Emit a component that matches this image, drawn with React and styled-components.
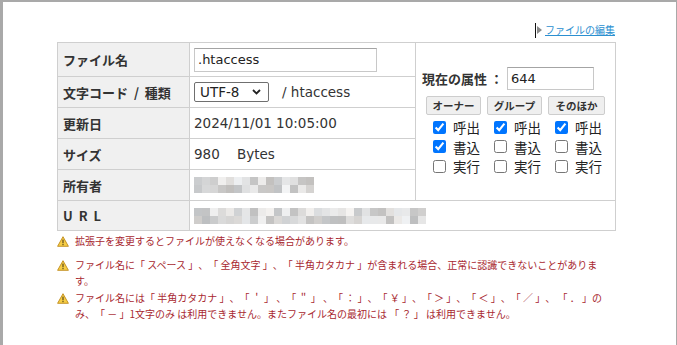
import React from 'react';
import styled, { createGlobalStyle } from 'styled-components';

const JP = '"Noto Sans CJK JP", "Noto Sans", sans-serif';
const LATIN = '"DejaVu Sans", "Noto Sans CJK JP", sans-serif';

const GlobalStyle = createGlobalStyle`
  html, body {
    margin: 0;
    padding: 0;
  }
  body {
    background: #a9a9a9;
    font-family: ${JP};
    color: #333;
    text-spacing-trim: space-all;
  }
`;

const Panel = styled.div`
  margin: 2px 1px 0 3px;
  min-height: 343px;
  background: #fff;
  box-sizing: border-box;
  padding: 20px 0 0 54px;
`;

const LinkBar = styled.div`
  width: 559px;
  height: 16px;
  margin-bottom: 4px;
  display: flex;
  justify-content: flex-end;
  align-items: center;
`;

const Caret = styled.span`
  width: 1px;
  height: 15px;
  background: #111;
  margin-right: 1px;
`;

const Arrow = styled.span`
  width: 0;
  height: 0;
  border-top: 4px solid transparent;
  border-bottom: 4px solid transparent;
  border-left: 5px solid #8a8a8a;
  margin-right: 3px;
`;

const EditLink = styled.a`
  font-family: ${JP};
  font-size: 10px;
  line-height: 16px;
  color: #2b8fd0;
  text-decoration: underline;
  margin-right: 1px;
`;

const Grid = styled.div`
  width: 559px;
  box-sizing: border-box;
  display: grid;
  grid-template-columns: 132px 226px 1fr;
  grid-template-rows: 34px 31px 31px 31px 31px 30px;
  border-top: 1px solid #cfcfcf;
  border-left: 1px solid #cfcfcf;
`;

const Cell = styled.div`
  border-right: 1px solid #cfcfcf;
  border-bottom: 1px solid #cfcfcf;
  display: flex;
  align-items: center;
  min-width: 0;
`;

const Label = styled(Cell)`
  background: #f0f0f0;
  padding-left: 5px;
  font-family: ${JP};
  font-weight: 700;
  font-size: 13px;
  color: #333;
  white-space: pre;
  letter-spacing: ${(p) => (p.$spread ? '6px' : '0')};
`;

const Value = styled(Cell)`
  padding-left: 4px;
  font-family: ${LATIN};
  font-size: 13.5px;
  color: #333;
  white-space: pre;
  grid-column: ${(p) => p.$span || 'auto'};
`;

const TextInput = styled.input`
  box-sizing: border-box;
  width: ${(p) => p.$w}px;
  height: ${(p) => p.$h}px;
  border: 1px solid #c8c8c8;
  border-top-color: #a4a4a4;
  padding: 0 0 0 3px;
  font-family: ${LATIN};
  font-size: 13px;
  color: #222;
  outline: none;
`;

const SelectWrap = styled.span`
  position: relative;
  display: inline-flex;
`;

const Select = styled.select`
  appearance: none;
  box-sizing: border-box;
  width: 75px;
  height: 20px;
  border: 1px solid #6f6f6f;
  border-radius: 2px;
  background: #fff;
  padding: 0 0 0 5px;
  font-family: ${LATIN};
  font-size: 13.5px;
  color: #222;
`;

const Chevron = styled.svg`
  position: absolute;
  right: 8px;
  top: 7px;
  pointer-events: none;
`;

const Kind = styled.span`
  margin-left: 13px;
`;

const Attr = styled.div`
  grid-column: 3;
  grid-row: 1 / 6;
  border-right: 1px solid #cfcfcf;
  border-bottom: 1px solid #cfcfcf;
  display: flex;
  flex-direction: column;
  justify-content: center;
  padding-left: 6px;
`;

const AttrRow = styled.div`
  display: flex;
  align-items: center;
  font-family: ${JP};
  font-weight: 700;
  font-size: 13px;
  color: #333;
  gap: 4px;
`;

const Perms = styled.div`
  display: grid;
  grid-template-columns: 55px 55px 57px;
  column-gap: 6px;
  padding-left: 4px;
  margin-top: 6px;
`;

const RoleButton = styled.button`
  height: 19px;
  padding: 0;
  border: 1px solid #cdcdcd;
  border-radius: 2px;
  background: #efefef;
  font-family: ${JP};
  font-weight: 700;
  font-size: 10.5px;
  color: #333;
  margin-bottom: 2px;
`;

const PermCol = styled.div`
  display: flex;
  flex-direction: column;
  padding-left: ${(p) => (p.$head ? '0' : '7px')};
`;

const Check = styled.label`
  height: 19.5px;
  display: flex;
  align-items: center;
  gap: 7px;
  font-family: ${JP};
  font-size: 13.5px;
  color: #222;

  input {
    margin: 0;
    width: 13px;
    height: 13px;
    accent-color: #0075ff;
  }
`;

const Notes = styled.div`
  width: 559px;
  margin-top: 2px;
  font-family: ${JP};
  font-size: 10px;
  line-height: 16px;
  color: #a8282f;
`;

const Note = styled.div`
  display: flex;
  margin-bottom: ${(p) => (p.$gap ? '8px' : '1px')};
`;

const NoteIcon = styled.span`
  flex: 0 0 18px;
  height: 16px;
  display: flex;
  align-items: center;
`;

const NoteText = styled.span`
  flex: 1;
`;

const shade = (i, seed) => {
  const x = Math.sin(i * 12.9898 + seed * 78.233) * 43758.5453;
  const f = x - Math.floor(x);
  return Math.round(0xbe + f * 0x36);
};

const Mosaic = ({ cols, seed }) => (
  <svg width={cols * 8} height={16} viewBox={`0 0 ${cols * 8} 16`}>
    {Array.from({ length: cols * 2 }).map((_, i) => {
      const g = shade(i, seed);
      const tint = (i % 5) - 2;
      return (
        <rect
          key={i}
          x={(i % cols) * 8}
          y={Math.floor(i / cols) * 8}
          width={8}
          height={8}
          fill={`rgb(${g + tint},${g},${g - tint})`}
        />
      );
    })}
  </svg>
);

const Warning = () => (
  <svg width="12" height="11" viewBox="0 0 12 11">
    <path d="M6 0.7 L11.4 10.3 H0.6 Z" fill="#f6cd45" stroke="#c08a1a" strokeWidth="0.9" strokeLinejoin="round" />
    <rect x="5.4" y="3.6" width="1.2" height="3.7" fill="#5a4a1a" />
    <rect x="5.4" y="8" width="1.2" height="1.2" fill="#5a4a1a" />
  </svg>
);

const roles = ['オーナー', 'グループ', 'そのほか'];
const perms = [
  [true, true, false],
  [true, false, false],
  [true, false, false],
];
const permNames = ['呼出', '書込', '実行'];

const notes = [
  '拡張子を変更するとファイルが使えなくなる場合があります。',
  'ファイル名に「 スペース 」、「 全角文字 」、「 半角カタカナ 」が含まれる場合、正常に認識できないことがあります。',
  'ファイル名には「 半角カタカナ 」、「 ＇ 」 、「 ＂ 」 、「 ： 」、「 ￥ 」、「 ＞ 」、「 ＜ 」、「 ／ 」、 「 ． 」のみ、「 － 」1文字のみ は利用できません。またファイル名の最初には 「 ？ 」 は利用できません。',
];

const App = () => (
  <>
    <GlobalStyle />
    <Panel>
      <LinkBar>
        <Caret />
        <Arrow />
        <EditLink href="#">ファイルの編集</EditLink>
      </LinkBar>
      <Grid>
        <Label>ファイル名</Label>
        <Value>
          <TextInput $w={183} $h={24} defaultValue=".htaccess" />
        </Value>
        <Attr>
          <AttrRow>
            現在の属性 ：
            <TextInput $w={87} $h={23} defaultValue="644" />
          </AttrRow>
          <Perms>
            {roles.map((role) => (
              <PermCol key={role} $head>
                <RoleButton>{role}</RoleButton>
              </PermCol>
            ))}
            {roles.map((role, c) => (
              <PermCol key={role + 'p'}>
                {permNames.map((name, r) => (
                  <Check key={name}>
                    <input type="checkbox" defaultChecked={perms[c][r]} />
                    {name}
                  </Check>
                ))}
              </PermCol>
            ))}
          </Perms>
        </Attr>

        <Label>{'文字コード  /  種類'}</Label>
        <Value>
          <SelectWrap>
            <Select defaultValue="UTF-8">
              <option>UTF-8</option>
              <option>EUC-JP</option>
              <option>Shift_JIS</option>
            </Select>
            <Chevron width="9" height="6" viewBox="0 0 9 6">
              <path d="M1 1 L4.5 4.5 L8 1" fill="none" stroke="#222" strokeWidth="1.8" />
            </Chevron>
          </SelectWrap>
          <Kind>/ htaccess</Kind>
        </Value>

        <Label>更新日</Label>
        <Value>2024/11/01 10:05:00</Value>

        <Label>サイズ</Label>
        <Value>{'980    Bytes'}</Value>

        <Label>所有者</Label>
        <Value>
          <Mosaic cols={15} seed={3} />
        </Value>

        <Label $spread>URL</Label>
        <Value $span="2 / 4">
          <Mosaic cols={29} seed={7} />
        </Value>
      </Grid>

      <Notes>
        {notes.map((text, i) => (
          <Note key={i} $gap={i === 0}>
            <NoteIcon>
              <Warning />
            </NoteIcon>
            <NoteText>{text}</NoteText>
          </Note>
        ))}
      </Notes>
    </Panel>
  </>
);

export default App;
